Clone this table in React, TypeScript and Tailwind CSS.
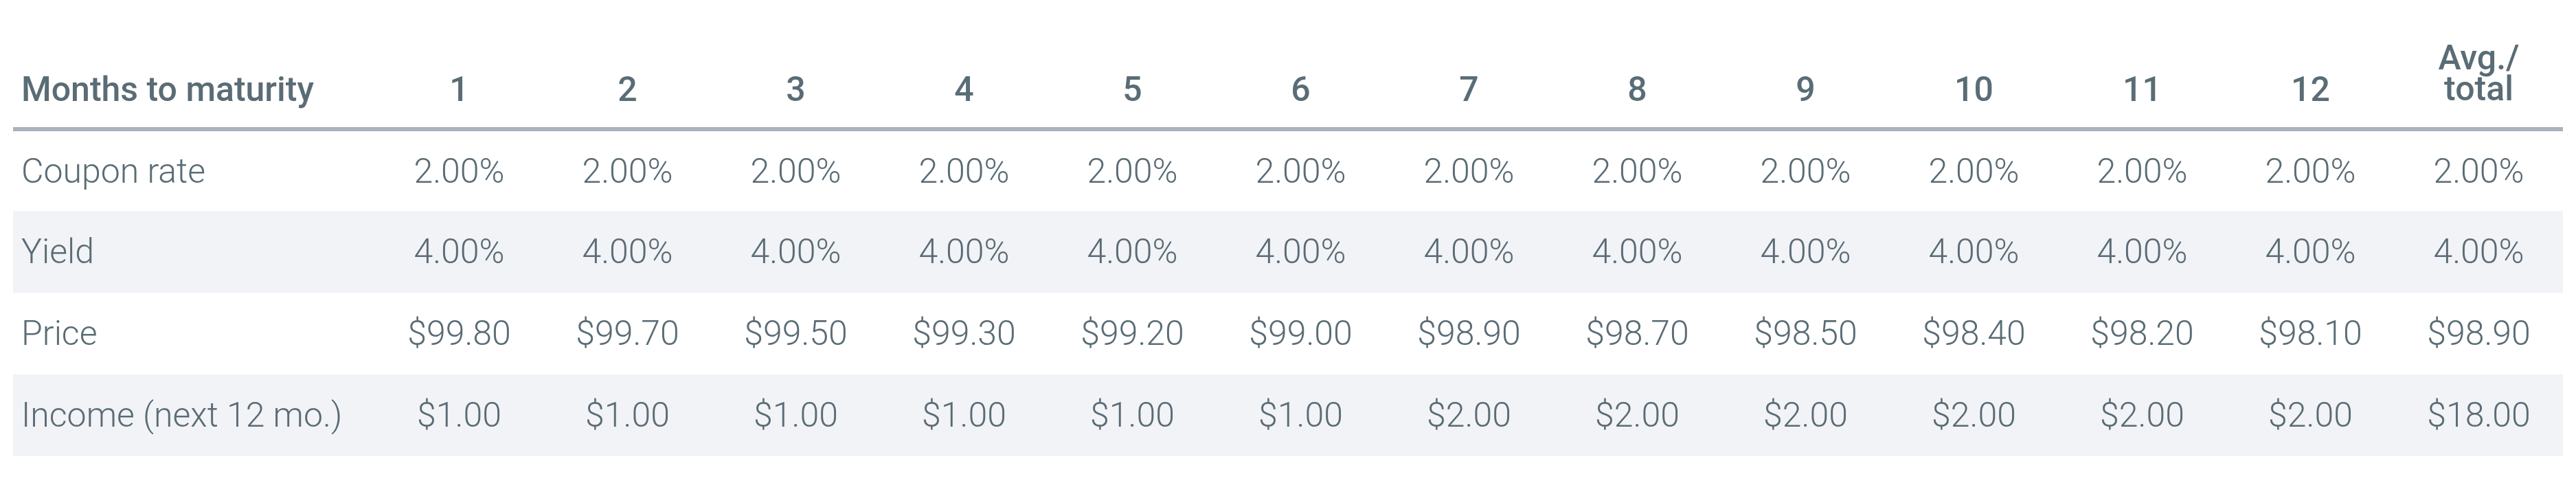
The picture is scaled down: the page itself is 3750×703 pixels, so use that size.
import React from 'react';

type Row = {
  label: string;
  values: string[];
};

const months = ['1', '2', '3', '4', '5', '6', '7', '8', '9', '10', '11', '12'];

const rows: Row[] = [
  { label: 'Coupon rate', values: Array(13).fill('2.00%') },
  { label: 'Yield', values: Array(13).fill('4.00%') },
  {
    label: 'Price',
    values: ['$99.80', '$99.70', '$99.50', '$99.30', '$99.20', '$99.00', '$98.90', '$98.70', '$98.50', '$98.40', '$98.20', '$98.10', '$98.90'],
  },
  {
    label: 'Income (next 12 mo.)',
    values: ['$1.00', '$1.00', '$1.00', '$1.00', '$1.00', '$1.00', '$2.00', '$2.00', '$2.00', '$2.00', '$2.00', '$2.00', '$18.00'],
  },
];

export default function App() {
  return (
    <div className="min-h-[703px] bg-white px-[19px] pt-[62px] font-[family-name:Roboto,'Liberation_Sans',sans-serif] text-[#5a6c75]">
      <table className="w-full table-fixed border-collapse text-[50px]">
        <colgroup>
          <col className="w-[527px]" />
          {months.map((m) => (
            <col key={m} />
          ))}
          <col />
        </colgroup>
        <thead>
          <tr className="border-b-[6px] border-[#a9b3bd]">
            <th className="pb-[34px] pl-3 text-left align-bottom font-medium leading-[42px]">Months to maturity</th>
            {months.map((m) => (
              <th key={m} className="pb-[34px] text-center align-bottom font-medium leading-[42px]">
                {m}
              </th>
            ))}
            {/* two-line header, slightly looser so the lines don't collide */}
            <th className="pb-[33px] text-center align-bottom font-medium leading-[45px]">
              <span className="block">Avg./</span>
              <span className="block">total</span>
            </th>
          </tr>
        </thead>
        <tbody>
          {rows.map((row, i) => (
            <tr key={row.label} className={i % 2 === 1 ? 'h-[119px] bg-[#f2f3f7]' : 'h-[119px]'}>
              <td className="pl-3 text-left align-middle font-light whitespace-nowrap">{row.label}</td>
              {row.values.map((v, j) => (
                <td key={j} className="text-center align-middle font-light">
                  {v}
                </td>
              ))}
            </tr>
          ))}
        </tbody>
      </table>
    </div>
  );
}
